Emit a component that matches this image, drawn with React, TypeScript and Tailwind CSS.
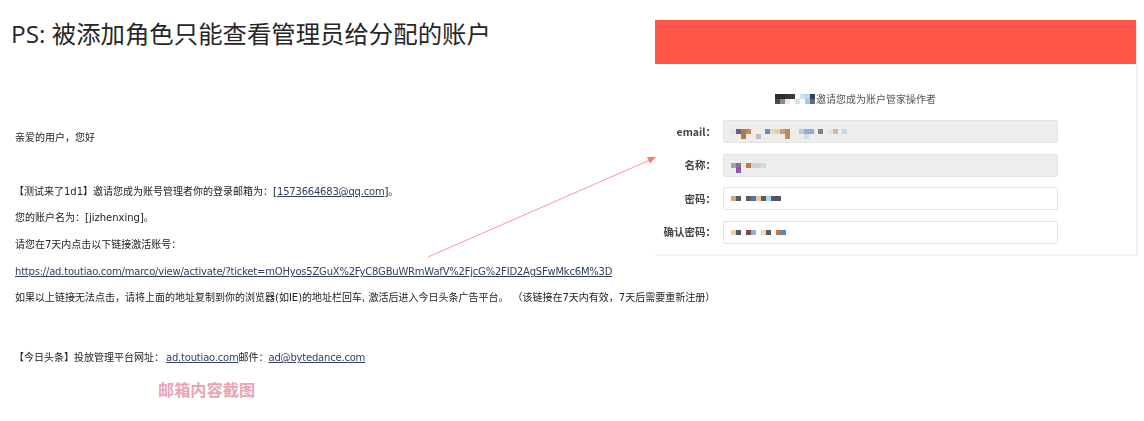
const BODY_FONT = "font-['DejaVu_Sans','Noto_Sans_CJK_SC',sans-serif]";
const LINK = 'underline text-[#33415f] tracking-[-0.2px]';

type Block = [number, number, string];

const inviter: Block[] = [
  [0, 0, '#2b2b2b'], [5, 0, '#2b2b2b'], [10, 0, '#333333'], [15, 0, '#3a3a3a'],
  [0, 5, '#4a4a48'], [5, 5, '#8a8a84'], [10, 5, '#ece8ee'], [20, 5, '#c8f0d0'],
  [25, 0, '#c8e4f0'], [30, 0, '#b0d8ec'], [35, 0, '#2f3f55'], [30, 5, '#a8c8e8'], [35, 5, '#5a6a88'],
];
const emailBlocks: Block[] = [
  [0, 0, '#e6e4ea'], [5, 0, '#6b5f8f'], [10, 0, '#b07a50'], [15, 0, '#c08a58'],
  [25, 0, '#f3efdc'], [34, 0, '#5d94c8'], [39, 0, '#e8d8c0'], [44, 0, '#e8cfa8'], [49, 0, '#c8a078'], [54, 0, '#b09060'],
  [68, 0, '#c0c8d0'], [73, 0, '#8cb0d8'], [78, 0, '#8cb0d8'], [87, 0, '#808080'], [97, 0, '#e0e6ee'], [102, 0, '#d8b898'], [111, 0, '#b8e0ea'],
  [10, 5, '#b07a50'], [25, 5, '#c0bcd0'], [54, 5, '#b09060'], [73, 5, '#d0dce8'],
];
const nameBlocks: Block[] = [
  [0, 0, '#a8a498'], [5, 0, '#8a6aa0'], [10, 0, '#efe8d0'], [15, 0, '#b87a50'], [20, 0, '#d0ced8'], [25, 0, '#d0ced8'], [30, 0, '#d8d6de'],
  [5, 5, '#8858a0'],
];
const passwordBlocks: Block[] = [
  [0, 0, '#c8a888'], [5, 0, '#5a5a5a'], [15, 0, '#5a5a68'], [20, 0, '#5a70a8'], [25, 0, '#e8c8a8'], [30, 0, '#5a5a5a'], [35, 0, '#a8d8f0'], [40, 0, '#54506a'], [45, 0, '#54506a'],
];
const confirmBlocks: Block[] = [
  [0, 0, '#ecd0a8'], [5, 0, '#5a5a5a'], [15, 0, '#7a4a4a'], [20, 0, '#90b0d8'], [30, 0, '#eed8b8'], [35, 0, '#5a5a5a'], [45, 0, '#b87a50'], [50, 0, '#5088c0'],
];

function Mosaic({ blocks, width, height }: { blocks: Block[]; width: number; height: number }) {
  return (
    <svg width={width} height={height} className="block shrink-0">
      {blocks.map(([x, y, fill], i) => (
        <rect key={i} x={x} y={y} width={5} height={5} fill={fill} />
      ))}
    </svg>
  );
}

function FormRow({ label, disabled, children }: { label: string; disabled?: boolean; children: React.ReactNode }) {
  return (
    <div className="flex items-center h-[23px]">
      <span className="w-[61px] text-right text-[10.5px] font-bold text-[#444] whitespace-nowrap mr-[7px]">{label}</span>
      <div
        className={`w-[335px] h-[23px] rounded-[2px] border border-[#e6e4e0] flex items-start pt-[8px] pl-[7px] ${
          disabled ? 'bg-[#eeedeb]' : 'bg-white'
        }`}
      >
        {children}
      </div>
    </div>
  );
}

export default function App() {
  return (
    <div className="relative w-[1144px] h-[421px] overflow-hidden bg-white flex">
      <div className={`w-[655px] shrink-0 ${BODY_FONT} text-[10px] leading-[14px] text-[#222]`}>
        <h1 className="ml-[11px] mt-[16px] h-[36px] text-[24.4px] leading-[36px] font-normal text-[#262626] whitespace-nowrap font-['Open_Sans','Noto_Sans_CJK_SC',sans-serif]">
          PS: 被添加角色只能查看管理员给分配的账户
        </h1>
        <div className="ml-[15px] blur-[0.4px] whitespace-nowrap">
          <p className="mt-[79px]">亲爱的用户，您好</p>
          <p className="mt-[40px] -ml-[1px]">
            【测试来了1d1】邀请您成为账号管理者你的登录邮箱为：[<span className={LINK}>1573664683@qq.com</span>]。
          </p>
          <p className="mt-[12px]">您的账户名为：[jizhenxing]。</p>
          <p className="mt-[13px]">请您在7天内点击以下链接激活账号：</p>
          <p className={`mt-[13px] ${LINK} tracking-[-0.21px]`}>
            https://ad.toutiao.com/marco/view/activate/?ticket=mOHyos5ZGuX%2FyC8GBuWRmWafV%2FjcG%2FID2AgSFwMkc6M%3D
          </p>
          <p className="mt-[12px]">
            如果以上链接无法点击，请将上面的地址复制到你的浏览器(如IE)的地址栏回车, 激活后进入今日头条广告平台。<span className="ml-[9px]">（该链接在7天内有效，7天后需要重新注册）</span>
          </p>
          <p className="mt-[46px] -ml-[1px]">
            【今日头条】投放管理平台网址：<span className={`${LINK} ml-[2px]`}>ad.toutiao.com</span>邮件：<span className={LINK}>ad@bytedance.com</span>
          </p>
        </div>
        <p className="ml-[158px] mt-[12px] text-[16.2px] leading-[24px] font-bold text-[#e8a5b5] whitespace-nowrap font-['Noto_Sans_CJK_SC',sans-serif]">
          邮箱内容截图
        </p>
      </div>

      <div className="mt-[20px] w-[483px] h-[236px] shrink-0 flex flex-col bg-white border-b-2 border-r-2 border-[#f3f3f3] font-['Noto_Sans_CJK_SC',sans-serif]">
        <div className="h-[44px] bg-[#ff5549]" />
        <div className="flex items-center h-[10px] mt-[30px] ml-[120px] blur-[0.3px]">
          <Mosaic blocks={inviter} width={40} height={10} />
          <span className="ml-[1px] text-[10px] leading-[10px] text-[#555] whitespace-nowrap">邀请您成为账户管家操作者</span>
        </div>
        <div className="flex flex-col gap-[10.5px] mt-[16px] blur-[0.3px]">
          <FormRow label="email：" disabled>
            <Mosaic blocks={emailBlocks} width={116} height={10} />
          </FormRow>
          <FormRow label="名称：" disabled>
            <Mosaic blocks={nameBlocks} width={35} height={10} />
          </FormRow>
          <FormRow label="密码：">
            <Mosaic blocks={passwordBlocks} width={50} height={5} />
          </FormRow>
          <FormRow label="确认密码：">
            <Mosaic blocks={confirmBlocks} width={55} height={5} />
          </FormRow>
        </div>
      </div>

      <svg className="absolute left-[425px] top-[150px]" width={235} height={112} viewBox="0 0 235 112">
        <line x1={3} y1={107} x2={225} y2={10} stroke="#ff9696" strokeWidth={1} />
        <polygon points="222,7 231,7 225,13.5" fill="#ff7a74" />
      </svg>
    </div>
  );
}
